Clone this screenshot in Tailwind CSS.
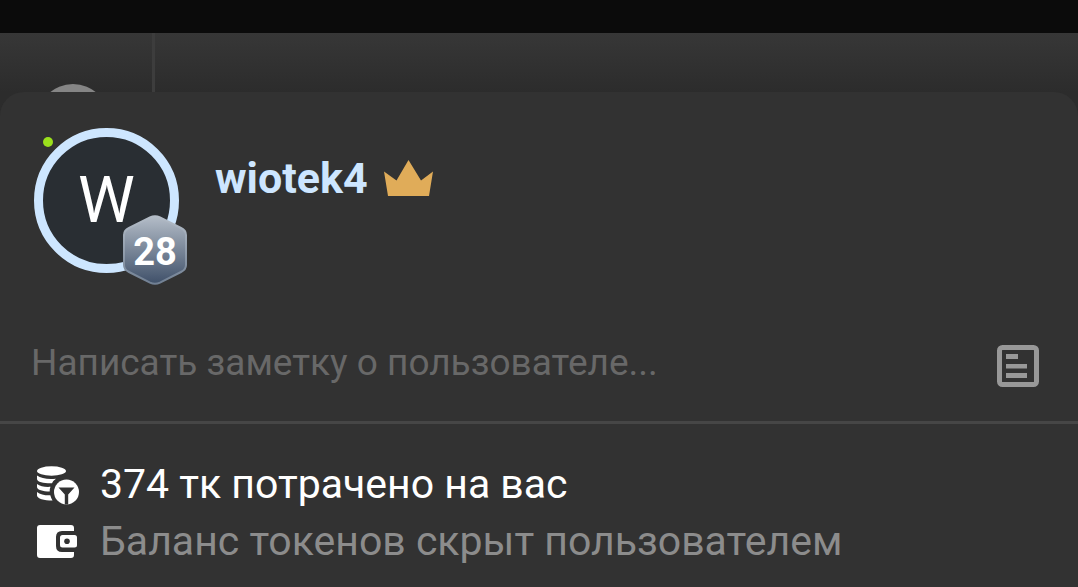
<!DOCTYPE html>
<html lang="ru">
<head>
<meta charset="utf-8">
<meta name="viewport" content="width=device-width, initial-scale=1">
<title>wiotek4</title>
<script src="https://cdn.jsdelivr.net/npm/@tailwindcss/browser@4"></script>
</head>
<body class="flex min-h-screen flex-col overflow-x-hidden bg-[#0b0b0b] font-['Roboto',sans-serif] text-white">
  <div class="h-[33px] shrink-0"></div>
  <div class="flex h-[59px] shrink-0 bg-linear-to-b from-[#373737] to-[#2c2c2c]">
    <div class="flex w-[155px] justify-center overflow-hidden border-r-3 border-[#3d3d3d] pt-[51px] pr-1.5">
      <div class="size-[72px] shrink-0 rounded-full bg-[#858585]"></div>
    </div>
  </div>
  <main class="flex-1 bg-[#2c2c2c]">
    <div class="min-h-[495px] rounded-t-3xl bg-[#323232]">
      <header class="flex items-start gap-9 px-[34px] pt-9">
        <div class="relative">
          <div class="flex size-[145px] items-center justify-center rounded-full border-9 border-[#cde6ff] bg-[#292e33] text-[64px] leading-none">W</div>
          <span class="absolute top-[9px] left-[9px] size-[10px] rounded-full bg-[#9be01c]"></span>
          <div class="absolute top-[87px] left-[88px] flex h-[70px] w-[66px] items-center justify-center pt-1">
            <svg class="absolute inset-0 size-full" viewBox="0 0 66 70" aria-hidden="true">
              <defs>
                <linearGradient id="hex" x1="0" y1="0" x2="0" y2="1"><stop offset="0" stop-color="#b4bdc8"/><stop offset="1" stop-color="#3f5069"/></linearGradient>
                <linearGradient id="rim" x1="0" y1="0" x2="0" y2="1"><stop offset="0" stop-color="#b4bdc8"/><stop offset="1" stop-color="#718093"/></linearGradient>
              </defs>
              <path d="M28 2.300Q33 0 38 2.300L59 13Q64 15.500 64 20V50Q64 54.500 59 57L38 67.700Q33 70 28 67.700L7 57Q2 54.500 2 50V20Q2 15.500 7 13Z" fill="url(#hex)" stroke="url(#rim)" stroke-width="2"/>
            </svg>
            <span class="relative text-[38px] leading-none font-bold">28</span>
          </div>
        </div>
        <div class="flex items-center gap-4 pt-[25px]">
          <h1 class="text-[43px] leading-[50px] font-bold text-[#cde6ff]">wiotek4</h1>
          <svg class="h-9 w-[49px]" viewBox="0 0 49 36" aria-hidden="true"><path d="M24.500 0 37 20.500 49 11.500 45 36H4L0 11.500 12.500 20.500Z" fill="#e0ac59"/></svg>
        </div>
      </header>
      <div class="mt-12 flex h-[103px] items-center border-b-3 border-[#464646] pr-[39px] pb-4 pl-[31px]">
        <input type="text" aria-label="Заметка о пользователе" placeholder="Написать заметку о пользователе..." class="min-w-0 flex-1 bg-transparent text-[37px] leading-[48px] outline-none placeholder:text-[#686868]">
        <button type="button" aria-label="Сохранить заметку" class="mt-1.5">
          <svg class="size-[42px]" viewBox="0 0 42 42" aria-hidden="true"><rect x="2.500" y="2.500" width="37" height="37" rx="3" fill="none" stroke="#989898" stroke-width="5"/><path d="M9 9h12v5H9zM9 19h21v4.500H9zM9 28h21v5H9z" fill="#989898"/></svg>
        </button>
      </div>
      <ul class="pt-8 pl-9 text-[41px] leading-[57px]">
        <li class="flex items-center gap-5">
          <svg class="size-11 shrink-0" viewBox="0 0 44 44" aria-hidden="true">
            <g fill="#fff">
              <ellipse cx="15.500" cy="8" rx="14.500" ry="4.700"/>
              <path d="M1 12.500C5 15.500 12 16.500 20 15.700Q17 17.500 16 20.300C9 20.500 1 19.500 1 16ZM1 21C4 23.300 9 24.200 14.500 23.800Q13.500 26 13.700 28.500C7 28.400 1 27 1 24ZM1 29C4 31.500 9 32.500 14.300 32.300Q15 35 16.500 37.500C8 37.500 1 35.500 1 32.500Z"/>
              <circle cx="30.500" cy="29" r="12.500"/>
            </g>
            <path d="M22.500 24.500H38.500L32.200 31.500V41.500H28.800V31.500Z" fill="#323232"/>
          </svg>
          <span>374 тк потрачено на вас</span>
        </li>
        <li class="flex items-center gap-5 text-[#8c8c8c]">
          <svg class="size-11 shrink-0" viewBox="0 0 44 44" aria-hidden="true">
            <path d="M4 5H35Q38 5 38 8V11H26Q20 11 20 17V26Q20 32 26 32H38V35Q38 38 35 38H4Q1 38 1 35V8Q1 5 4 5Z" fill="#fff"/>
            <rect x="24" y="15" width="17" height="12.500" rx="2.500" fill="#fff"/>
            <circle cx="31" cy="21.200" r="2.800" fill="#323232"/>
          </svg>
          <span>Баланс токенов скрыт пользователем</span>
        </li>
      </ul>
    </div>
  </main>
</body>
</html>
